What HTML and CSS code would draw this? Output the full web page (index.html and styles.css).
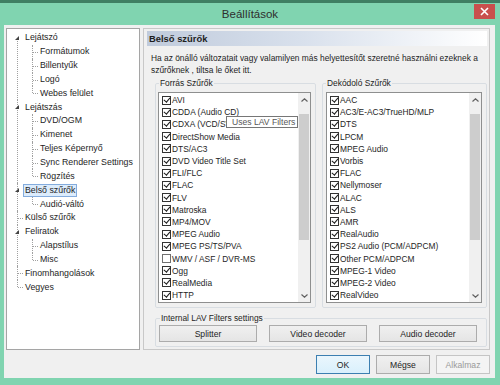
FILE: index.html
```html
<!DOCTYPE html>
<html lang="hu">
<head>
<meta charset="UTF-8">
<title>Beállítások</title>
<link rel="stylesheet" href="styles.css">
</head>
<body>

<div class="taskstrip"></div>

<!-- Window title bar -->
<div class="titlebar">
  <span></span>
  <span class="title">Beállítások</span>
  <span class="close-btn">
    <svg width="9" height="9" viewBox="0 0 9 9"><path d="M1 1L8 8M8 1L1 8" stroke="#fff" stroke-width="1.6"/></svg>
  </span>
</div>

<div class="client">
  <div class="main">

    <!-- Left navigation tree -->
    <div class="tree">
      <ul class="tree-root">
        <li class="first"><span class="exp"></span><div class="row"><span class="lbl">Lejátszó</span></div>
          <ul class="sub">
            <li><div class="row"><span class="lbl">Formátumok</span></div></li>
            <li><div class="row"><span class="lbl">Billentyűk</span></div></li>
            <li><div class="row"><span class="lbl">Logó</span></div></li>
            <li><div class="row"><span class="lbl">Webes felület</span></div></li>
          </ul>
        </li>
        <li><span class="exp"></span><div class="row"><span class="lbl">Lejátszás</span></div>
          <ul class="sub">
            <li><div class="row"><span class="lbl">DVD/OGM</span></div></li>
            <li><div class="row"><span class="lbl">Kimenet</span></div></li>
            <li><div class="row"><span class="lbl">Teljes Képernyő</span></div></li>
            <li><div class="row"><span class="lbl">Sync Renderer Settings</span></div></li>
            <li><div class="row"><span class="lbl">Rögzítés</span></div></li>
          </ul>
        </li>
        <li><span class="exp"></span><div class="row"><span class="lbl sel">Belső szűrők</span></div>
          <ul class="sub">
            <li><div class="row"><span class="lbl">Audió-váltó</span></div></li>
          </ul>
        </li>
        <li class="leaf"><div class="row"><span class="lbl">Külső szűrők</span></div></li>
        <li><span class="exp"></span><div class="row"><span class="lbl">Feliratok</span></div>
          <ul class="sub">
            <li><div class="row"><span class="lbl">Alapstílus</span></div></li>
            <li><div class="row"><span class="lbl">Misc</span></div></li>
          </ul>
        </li>
        <li class="leaf"><div class="row"><span class="lbl">Finomhangolások</span></div></li>
        <li class="leaf last"><div class="row"><span class="lbl">Vegyes</span></div></li>
      </ul>
    </div>

    <!-- Settings page -->
    <div class="panel">
      <div class="page-header">Belső szűrők</div>
      <p class="desc">Ha az önálló változatait vagy valamilyen más helyettesítőt szeretné használni ezeknek a<br>szűrőknek , tiltsa le őket itt.</p>

      <div class="groups">
        <fieldset class="group group-src">
          <legend>Forrás Szűrők</legend>
          <div class="listbox">
            <div class="items">
              <div class="item"><span class="cb on"></span>AVI</div>
              <div class="item"><span class="cb on"></span>CDDA (Audio CD)</div>
              <div class="item"><span class="cb on"></span>CDXA (VCD/SV</div>
              <div class="item"><span class="cb on"></span>DirectShow Media</div>
              <div class="item"><span class="cb on"></span>DTS/AC3</div>
              <div class="item"><span class="cb on"></span>DVD Video Title Set</div>
              <div class="item"><span class="cb on"></span>FLI/FLC</div>
              <div class="item"><span class="cb on"></span>FLAC</div>
              <div class="item"><span class="cb on"></span>FLV</div>
              <div class="item"><span class="cb on"></span>Matroska</div>
              <div class="item"><span class="cb on"></span>MP4/MOV</div>
              <div class="item"><span class="cb on"></span>MPEG Audio</div>
              <div class="item"><span class="cb on"></span>MPEG PS/TS/PVA</div>
              <div class="item"><span class="cb off"></span>WMV / ASF / DVR-MS</div>
              <div class="item"><span class="cb on"></span>Ogg</div>
              <div class="item"><span class="cb on"></span>RealMedia</div>
              <div class="item"><span class="cb on"></span>HTTP</div>
            </div>
            <div class="scrollbar">
              <svg class="arrow" width="7" height="4" viewBox="0 0 7 4"><path d="M0.5 3.5L3.5 0.8L6.5 3.5" fill="none" stroke="#606060" stroke-width="1.2"/></svg>
              <div class="thumb"></div>
              <svg class="arrow" width="7" height="4" viewBox="0 0 7 4"><path d="M0.5 0.5L3.5 3.2L6.5 0.5" fill="none" stroke="#606060" stroke-width="1.2"/></svg>
            </div>
            <div class="tooltip">Uses LAV Filters</div>
          </div>
        </fieldset>

        <fieldset class="group group-dec">
          <legend>Dekódoló Szűrők</legend>
          <div class="listbox">
            <div class="items">
              <div class="item"><span class="cb on"></span>AAC</div>
              <div class="item"><span class="cb on"></span>AC3/E-AC3/TrueHD/MLP</div>
              <div class="item"><span class="cb on"></span>DTS</div>
              <div class="item"><span class="cb on"></span>LPCM</div>
              <div class="item"><span class="cb on"></span>MPEG Audio</div>
              <div class="item"><span class="cb on"></span>Vorbis</div>
              <div class="item"><span class="cb on"></span>FLAC</div>
              <div class="item"><span class="cb on"></span>Nellymoser</div>
              <div class="item"><span class="cb on"></span>ALAC</div>
              <div class="item"><span class="cb on"></span>ALS</div>
              <div class="item"><span class="cb on"></span>AMR</div>
              <div class="item"><span class="cb on"></span>RealAudio</div>
              <div class="item"><span class="cb on"></span>PS2 Audio (PCM/ADPCM)</div>
              <div class="item"><span class="cb on"></span>Other PCM/ADPCM</div>
              <div class="item"><span class="cb on"></span>MPEG-1 Video</div>
              <div class="item"><span class="cb on"></span>MPEG-2 Video</div>
              <div class="item"><span class="cb on"></span>RealVideo</div>
            </div>
            <div class="scrollbar">
              <svg class="arrow" width="7" height="4" viewBox="0 0 7 4"><path d="M0.5 3.5L3.5 0.8L6.5 3.5" fill="none" stroke="#606060" stroke-width="1.2"/></svg>
              <div class="thumb"></div>
              <svg class="arrow" width="7" height="4" viewBox="0 0 7 4"><path d="M0.5 0.5L3.5 3.2L6.5 0.5" fill="none" stroke="#606060" stroke-width="1.2"/></svg>
            </div>
          </div>
        </fieldset>
      </div>

      <fieldset class="group group-lav">
        <legend>Internal LAV Filters settings</legend>
        <div class="lav-buttons">
          <button class="btn">Splitter</button>
          <button class="btn">Video decoder</button>
          <button class="btn">Audio decoder</button>
        </div>
      </fieldset>
    </div>
  </div>

  <!-- Dialog buttons -->
  <div class="actions">
    <button class="btn dlg default">OK</button>
    <button class="btn dlg">Mégse</button>
    <button class="btn dlg" disabled>Alkalmaz</button>
  </div>
</div>

</body>
</html>
```

FILE: styles.css
```css
body {
margin: 0;
width: 500px;
height: 385px;
overflow: hidden;
background: #80d4b0;
font-family: "Liberation Sans", Arial, sans-serif;
font-size: 8.4px;
color: #1e1e1e;
}

/* Strip of the window behind */
.taskstrip {
height: 3px;
background: #3f7f63;
}

/* Title bar */
.titlebar {
height: 22px;
display: grid;
grid-template-columns: 1fr auto 1fr;
align-items: start;
}

.title {
font-size: 11.5px;
color: #2e2e2e;
line-height: 22px;
}

.close-btn {
justify-self: end;
margin-right: 5px;
margin-top: 1px;
width: 21px;
height: 15px;
background: #c9504d;
display: flex;
align-items: center;
justify-content: center;
}

/* Client area */
.client {
margin: 0 5px 0 4px;
height: 353px;
box-sizing: border-box;
padding: 3px 5px 4px 2px;
background: #f0f0f0;
display: flex;
flex-direction: column;
}

.main {
display: flex;
gap: 3px;
height: 322px;
}

/* Navigation tree */
.tree {
width: 134px;
box-sizing: border-box;
border: 1px solid #a5a5a5;
background: #fff;
padding-top: 2px;
font-size: 8.8px;
}

.tree ul {
list-style: none;
margin: 0;
padding: 0;
}

.tree li {
position: relative;
}

.tree .row {
height: 13.85px;
display: flex;
align-items: center;
}

.lbl {
padding: 0 1px;
border: 1px solid transparent;
line-height: 11px;
white-space: nowrap;
}

.lbl.sel {
background: #dcecfc;
border-color: #84acdd;
}

.tree-root > li {
padding-left: 16px;
}

.tree-root > li::before {
content: "";
position: absolute;
left: 10px;
top: 0;
bottom: 0;
border-left: 1px dotted #a0a0a0;
}

.tree-root > li.first::before {
top: 7px;
}

.tree-root > li.last::before {
bottom: auto;
height: 7px;
}

.tree-root > li.leaf::after {
content: "";
position: absolute;
left: 11px;
top: 7px;
width: 5px;
border-top: 1px dotted #a0a0a0;
}

.exp {
position: absolute;
left: 8px;
top: 5px;
width: 0;
height: 0;
border-left: 4px solid transparent;
border-bottom: 4px solid #444;
z-index: 1;
}

.sub {
padding-left: 9px !important;
}

.sub > li {
padding-left: 6px;
}

.sub > li::before {
content: "";
position: absolute;
left: 0;
top: 0;
bottom: 0;
border-left: 1px dotted #a0a0a0;
}

.sub > li:last-child::before {
bottom: auto;
height: 7px;
}

.sub > li::after {
content: "";
position: absolute;
left: 1px;
top: 7px;
width: 5px;
border-top: 1px dotted #a0a0a0;
}

/* Settings page */
.panel {
flex: 1;
box-sizing: border-box;
border: 1px solid #c8c8c8;
padding: 2px 2px 0 3px;
}

.page-header {
height: 15px;
line-height: 15px;
padding-left: 2px;
font-weight: bold;
font-size: 9.4px;
background: linear-gradient(to right, #c0cbdc, #d8e0ec 45%, #ffffff);
}

.desc {
margin: 6px 0 0 4px;
line-height: 12px;
height: 24px;
}

.groups {
display: flex;
gap: 6px;
margin: 2px 0 0 8px;
}

/* Group boxes */
.group {
margin: 0;
min-width: 0;
box-sizing: border-box;
border: 1px solid #d8dde2;
border-radius: 2px;
padding: 4px 4px 4px 2px;
}

.group legend {
padding: 0 1px;
margin-left: 1px;
line-height: 10px;
height: 10px;
}

.group-src {
width: 161px;
}

.group-dec {
width: 165px;
padding-left: 3px;
}

.group-dec legend {
margin-left: 0;
}

/* Check lists */
.listbox {
position: relative;
height: 211px;
box-sizing: border-box;
border: 1px solid #8e8f8f;
background: #fff;
display: flex;
}

.items {
flex: 1;
padding: 1px 0 0 3px;
overflow: hidden;
}

.item {
height: 12.2px;
display: flex;
align-items: center;
white-space: nowrap;
}

.cb {
position: relative;
width: 9px;
height: 9px;
box-sizing: border-box;
border: 1px solid #333;
background: #fff;
margin-right: 1px;
flex: none;
}

.cb.off {
border-color: #707070;
}

.cb.on::after {
content: "";
position: absolute;
left: 2px;
top: -1px;
width: 2.5px;
height: 5px;
border: solid #1a1a1a;
border-width: 0 1.7px 1.7px 0;
transform: rotate(40deg);
}

.scrollbar {
width: 12px;
background: #f0f0f0;
display: flex;
flex-direction: column;
align-items: center;
padding: 5px 0 4px;
}

.scrollbar .thumb {
width: 10px;
height: 126px;
margin: 12px 0 auto;
background: #cdcdcd;
}

.tooltip {
position: absolute;
left: 67px;
top: 23px;
width: 72px;
height: 12px;
box-sizing: border-box;
border: 1px solid #767676;
background: #fff;
color: #575757;
padding-left: 5px;
line-height: 10px;
font-size: 8.6px;
white-space: nowrap;
}

/* LAV settings group */
.group-lav {
width: 332px;
margin: 5px 0 0 8px;
padding: 2px 3px 4px 3px;
}

.lav-buttons {
display: flex;
gap: 12px;
}

.btn {
font-family: "Liberation Sans", Arial, sans-serif;
font-size: 8.6px;
color: #1e1e1e;
height: 17px;
width: 98px;
padding: 0;
border: 1px solid #acacac;
border-radius: 0;
background: linear-gradient(#f0f0f0, #e5e5e5);
}

/* Dialog buttons */
.actions {
display: flex;
justify-content: flex-end;
gap: 6px;
margin-top: 5px;
}

.btn.dlg {
width: 54px;
height: 19px;
}

.btn.default {
border-color: #3c7fb1;
background: linear-gradient(#eaf6fd, #d9f0fc);
}

.btn:disabled {
color: #9a9a9a;
border-color: #c5c5c5;
background: #f4f4f4;
}
```
